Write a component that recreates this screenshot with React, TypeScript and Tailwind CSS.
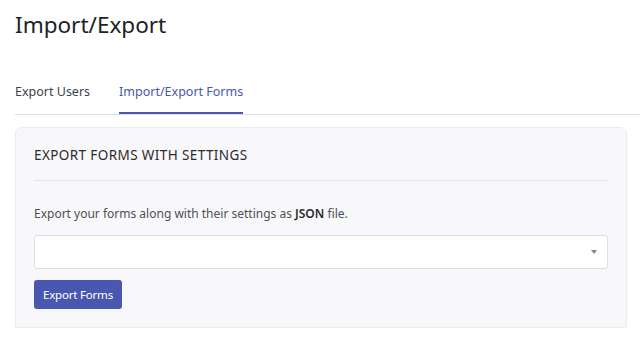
export default function App() {
  return (
    <div className="min-h-[337px] bg-white font-['Noto_Sans',sans-serif] text-[#1e1e1e]">
      <h1 className="pl-[15px] pt-[8px] text-[22.5px] leading-[34px] font-normal text-[#1d2327]">
        Import/Export
      </h1>

      <div className="ml-[15px] mt-[41px] flex border-b border-[#dcdde3] text-[12.5px]">
        <div className="pb-[12px] text-[#3c434a]">Export Users</div>
        <div className="ml-[29px] border-b-2 border-[#4a56b0] pb-[10px] text-[#4a56b0]">
          Import/Export Forms
        </div>
      </div>

      <div className="ml-[15px] mr-[13px] mt-[12px] rounded-t-[7px] border border-[#ebebf2] bg-[#f8f8fb] px-[18px] pb-[18px]">
        <div className="border-b border-[#e3e3ea] pb-[15px] pt-[17px] text-[13.5px] tracking-[0.4px] text-[#2b2b2b]">
          EXPORT FORMS WITH SETTINGS
        </div>
        <p className="mt-[24px] text-[12px] text-[#4f4f55]">
          Export your forms along with their settings as <b className="font-semibold text-[#2b2b2b]">JSON</b> file.
        </p>
        <div className="mt-[12px] flex h-[34px] items-center justify-end rounded-[3px] border border-[#dcdde6] bg-white pr-[10px]">
          <span className="h-0 w-0 border-x-[3px] border-t-[4px] border-x-transparent border-t-[#888]" />
        </div>
        <button className="mt-[11px] h-[29px] rounded-[3px] bg-[#4a57b0] px-[9px] text-[11.5px] tracking-[-0.2px] text-white">
          Export Forms
        </button>
      </div>
    </div>
  );
}
